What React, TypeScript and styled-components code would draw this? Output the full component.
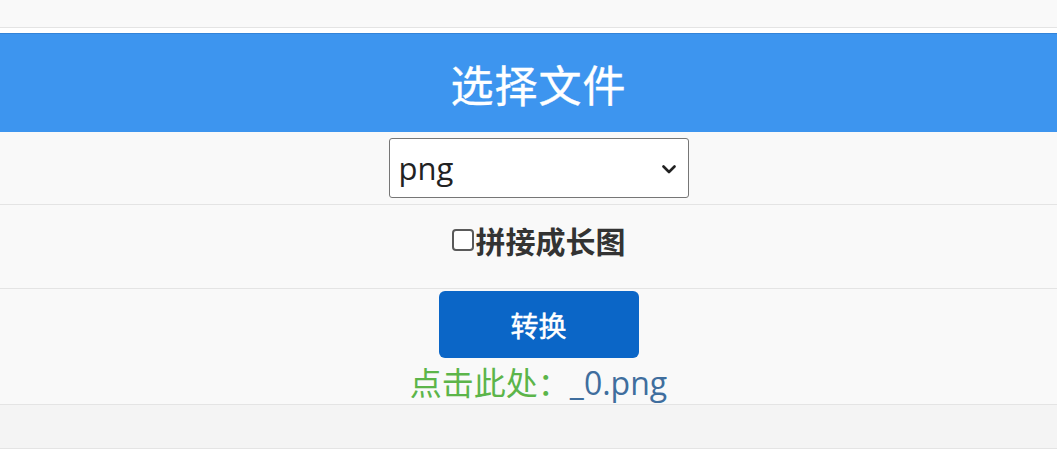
import React, { useState } from 'react';
import styled, { createGlobalStyle } from 'styled-components';

const GlobalStyle = createGlobalStyle`
  html, body {
    margin: 0;
    padding: 0;
    background: #ffffff;
  }
  body {
    font-family: 'Open Sans', 'Noto Sans CJK SC', sans-serif;
  }
`;

const Page = styled.div`
  display: flex;
  flex-direction: column;
  width: 100%;
`;

const Row = styled.div<{ $height: number; $tone?: string }>`
  height: ${(p) => p.$height}px;
  box-sizing: border-box;
  padding-left: 20px;
  background-color: ${(p) => p.$tone || '#f9f9f9'};
  border-bottom: 1px solid #e4e4e4;
  display: flex;
  flex-direction: column;
  align-items: center;
`;

const Header = styled.div`
  margin-top: 5px;
  height: 99px;
  padding-left: 20px;
  background-color: #3d95ef;
  border-top: 1px solid #3383d8;
  box-sizing: border-box;
  display: flex;
  align-items: center;
  justify-content: center;
  color: #ffffff;
  font-family: 'Noto Sans CJK SC', sans-serif;
  font-weight: 400;
  font-size: 43px;
  letter-spacing: 1px;
  -webkit-text-stroke: 0.4px #ffffff;
`;

const SelectWrap = styled.div`
  position: relative;
  margin-top: 6px;
  width: 300px;
  height: 60px;
`;

const Select = styled.select`
  appearance: none;
  width: 100%;
  height: 100%;
  box-sizing: border-box;
  border: 1px solid #767676;
  border-radius: 3px;
  background: #ffffff;
  padding: 0 0 0 9px;
  font-family: 'Open Sans', sans-serif;
  font-size: 31px;
  color: #222222;
  outline: none;
`;

const Chevron = styled.svg`
  position: absolute;
  right: 13px;
  top: 27px;
  pointer-events: none;
`;

const CheckLabel = styled.label`
  display: flex;
  align-items: center;
  margin-top: 13px;
  font-family: 'Noto Sans CJK SC', sans-serif;
  font-weight: 700;
  font-size: 30px;
  color: #333333;
  cursor: pointer;
`;

const Box = styled.input`
  appearance: none;
  width: 22px;
  height: 22px;
  margin: 0 2px 0 0;
  box-sizing: border-box;
  border: 2px solid #5a5a5a;
  border-radius: 4px;
  background: #ffffff;
  &:checked {
    background: #0a66c8;
    border-color: #0a66c8;
  }
`;

const ConvertButton = styled.button`
  margin-top: 2px;
  width: 200px;
  height: 67px;
  border: none;
  border-radius: 6px;
  background-color: #0b66c7;
  color: #ffffff;
  font-family: 'Noto Sans CJK SC', sans-serif;
  font-weight: 400;
  font-size: 28px;
  -webkit-text-stroke: 0.5px #ffffff;
  cursor: pointer;
`;

const Result = styled.div`
  margin-top: 3px;
  font-size: 32px;
  line-height: 40px;
  font-family: 'Open Sans', 'Noto Sans CJK SC', sans-serif;
`;

const Hint = styled.span`
  color: #5cb54a;
  font-family: 'Noto Sans CJK SC', sans-serif;
`;

const FileLink = styled.a`
  color: #3f6e9e;
  text-decoration: none;
`;

export default function App() {
  const [format, setFormat] = useState('png');
  const [merge, setMerge] = useState(false);

  return (
    <Page>
      <GlobalStyle />
      <Row $height={28} />
      <Header>选择文件</Header>
      <Row $height={73}>
        <SelectWrap>
          <Select value={format} onChange={(e) => setFormat(e.target.value)}>
            <option value="png">png</option>
            <option value="jpg">jpg</option>
            <option value="pdf">pdf</option>
          </Select>
          <Chevron width="14" height="9" viewBox="0 0 14 9">
            <path d="M1.5 1.5 L7 7 L12.5 1.5" fill="none" stroke="#222" strokeWidth="2.6" strokeLinecap="round" strokeLinejoin="round" />
          </Chevron>
        </SelectWrap>
      </Row>
      <Row $height={84}>
        <CheckLabel>
          <Box type="checkbox" checked={merge} onChange={(e) => setMerge(e.target.checked)} />
          拼接成长图
        </CheckLabel>
      </Row>
      <Row $height={116}>
        <ConvertButton>转换</ConvertButton>
        <Result>
          <Hint>点击此处：</Hint>
          <FileLink href="#">_0.png</FileLink>
        </Result>
      </Row>
      <Row $height={44} $tone="#f4f4f4" />
    </Page>
  );
}
